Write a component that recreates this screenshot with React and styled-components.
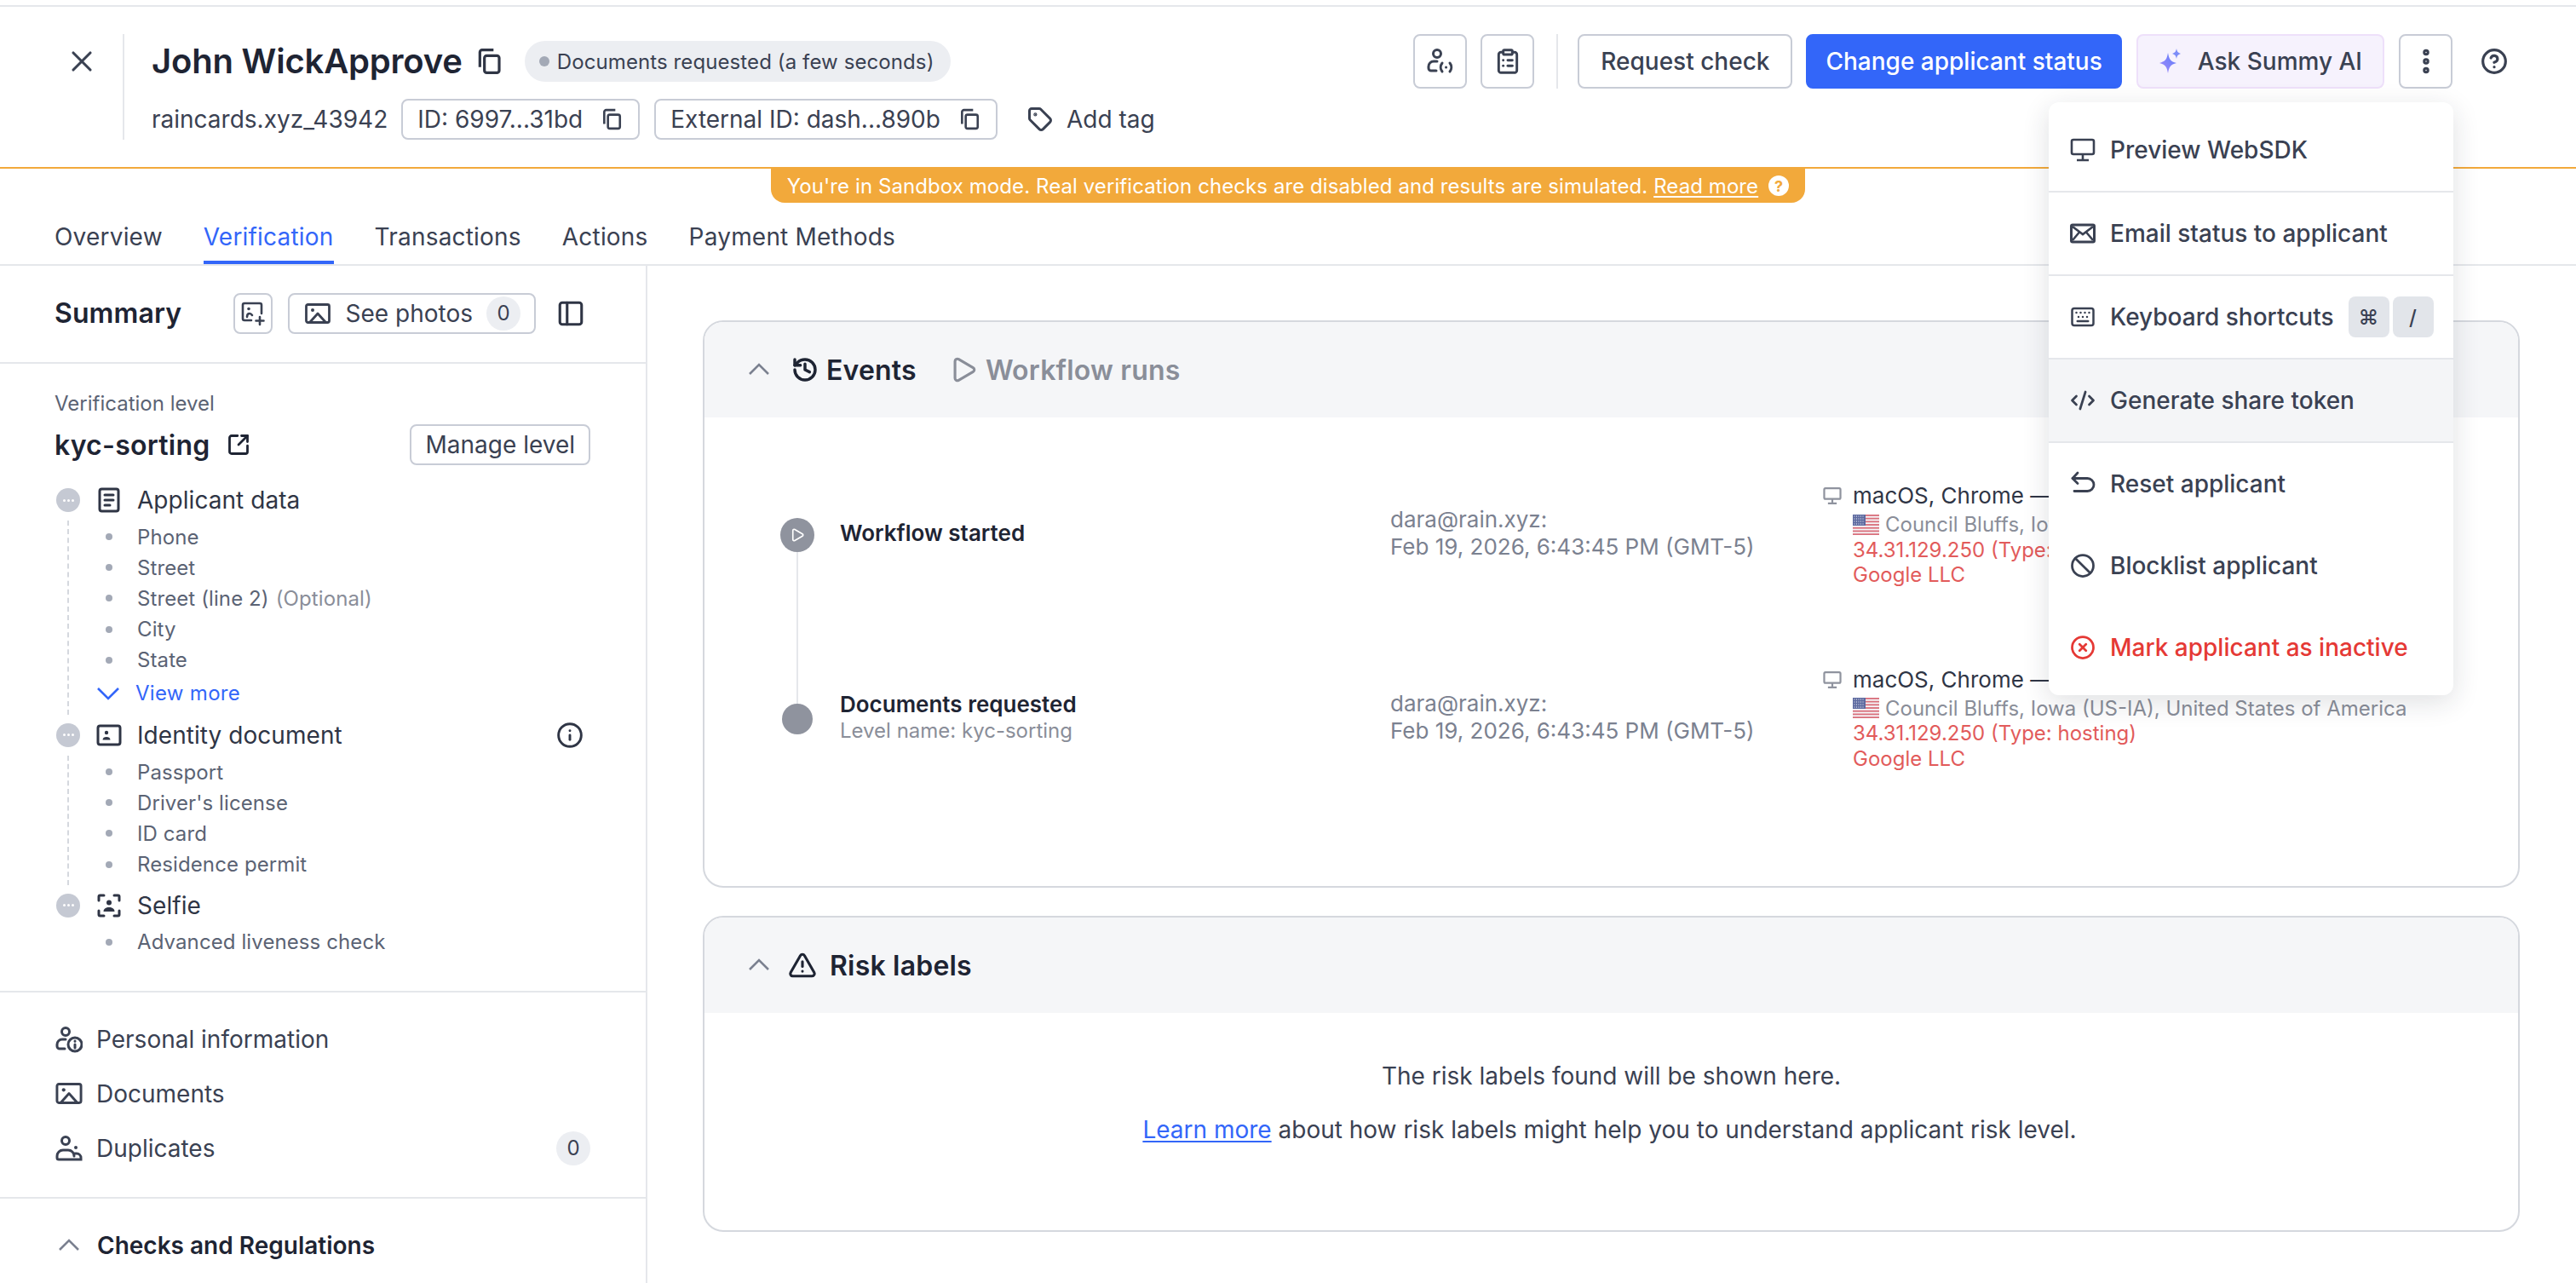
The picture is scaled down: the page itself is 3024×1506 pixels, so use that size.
import React from 'react';
import styled, { createGlobalStyle } from 'styled-components';
import {
  X, Tag, ClipboardList, Keyboard, CodeXml, Ban, CircleX, CircleHelp, PanelLeft,
  SquareArrowOutUpRight, Info, History, Play, TriangleAlert, MoreVertical,
} from 'lucide-react';

const GlobalStyle = createGlobalStyle`
  html, body { margin: 0; padding: 0; background: #fff; }
  body { font-family: Inter, "Liberation Sans", sans-serif; color: #2f3545; }
  * { box-sizing: border-box; }
`;

const Page = styled.div`
  position: relative;
  width: 3024px;
  height: 1506px;
  overflow: hidden;
  padding-top: 6px;
`;

const Header = styled.header`
  height: 192px;
  border-top: 2px solid #e5e7eb;
  border-bottom: 2px solid #f2a93b;
  display: flex;
  align-items: flex-start;
  padding-top: 32px;
`;

const CloseCell = styled.div`
  width: 146px;
  height: 124px;
  border-right: 2px solid #e5e7eb;
  display: flex;
  padding: 12px 0 0 76px;
  color: #3a4152;
`;

const TitleBlock = styled.div`
  margin-left: 32px;
`;

const TitleRow = styled.div`
  display: flex;
  align-items: center;
  height: 64px;
`;

const Name = styled.h1`
  margin: 0;
  font-size: 40px;
  line-height: 48px;
  font-weight: 600;
  letter-spacing: -0.2px;
  color: #1e2433;
`;

const TitleCopy = styled.span`
  display: flex;
  margin-left: 15px;
  color: #2f3545;
`;

const StatusBadge = styled.div`
  margin-left: 26px;
  height: 48px;
  padding: 0 19px 0 17px;
  border-radius: 24px;
  background: #eceef2;
  display: flex;
  align-items: center;
  gap: 9px;
  font-size: 24px;
  letter-spacing: 0.1px;
  color: #3a4152;
  white-space: nowrap;
`;

const StatusDot = styled.span`
  width: 12px;
  height: 12px;
  border-radius: 50%;
  background: #a3a9b6;
`;

const MetaRow = styled.div`
  display: flex;
  align-items: center;
  margin-top: 12px;
  height: 48px;
`;

const Handle = styled.span`
  font-size: 28px;
  color: #3a4152;
  margin-right: 16px;
`;

const IdPill = styled.div`
  height: 48px;
  padding: 0 18px 0 17px;
  margin-right: 17px;
  display: flex;
  align-items: center;
  gap: 21px;
  border: 2px solid #c8ccd6;
  border-radius: 8px;
  font-size: 28px;
  color: #3a4152;
  white-space: nowrap;
`;

const AddTag = styled.div`
  margin-left: 18px;
  display: flex;
  align-items: center;
  gap: 16px;
  font-size: 28px;
  color: #3a4152;
`;

const HeaderActions = styled.div`
  margin-left: auto;
  display: flex;
  align-items: center;
  height: 64px;
  padding-right: 80px;
`;

const ActionButton = styled.button`
  height: 64px;
  padding: 0 ${(p) => (p.$icon ? '0' : p.$pad ? `${p.$pad}px` : '25px')};
  width: ${(p) => (p.$icon ? '63px' : 'auto')};
  margin-left: ${(p) => p.$gap || 17}px;
  display: flex;
  align-items: center;
  justify-content: center;
  gap: 16px;
  border-radius: 8px;
  border: 2px solid ${(p) => (p.$primary ? '#3366f9' : p.$ai ? '#eee0fa' : '#c8ccd6')};
  background: ${(p) => (p.$primary ? '#3366f9' : p.$ai ? '#f6f2fd' : '#fff')};
  color: ${(p) => (p.$primary ? '#fff' : '#3a4152')};
  font: 500 28px Inter, sans-serif;
  white-space: nowrap;
`;

const ActionDivider = styled.div`
  width: 2px;
  height: 64px;
  margin-left: 26px;
  margin-right: -1px;
  background: #e5e7eb;
`;

const HelpButton = styled.div`
  margin-left: 33px;
  display: flex;
  color: #3a4152;
`;

const SandboxBanner = styled.div`
  position: absolute;
  top: 198px;
  left: 905px;
  width: 1214px;
  height: 40px;
  border-radius: 0 0 16px 16px;
  background: #f2a93b;
  color: #fff;
  font-size: 24px;
  letter-spacing: 0.08px;
  display: flex;
  align-items: center;
  justify-content: center;
  gap: 12px;
  white-space: nowrap;
`;

const BannerLink = styled.a`
  text-decoration: underline;
  text-underline-offset: 3px;
`;

const BannerHelp = styled.span`
  width: 24px;
  height: 24px;
  border-radius: 50%;
  background: #fff;
  color: #f2a93b;
  font-size: 18px;
  font-weight: 700;
  display: flex;
  align-items: center;
  justify-content: center;
`;

const Tabs = styled.nav`
  height: 114px;
  border-bottom: 2px solid #e5e7eb;
  display: flex;
  align-items: flex-end;
  gap: 48px;
  padding-left: 64px;
`;

const TabItem = styled.div`
  height: 64px;
  font-size: 28px;
  line-height: 64px;
  letter-spacing: 0.2px;
  white-space: nowrap;
  color: ${(p) => (p.$active ? '#3366f9' : '#3a4152')};
  border-bottom: 4px solid ${(p) => (p.$active ? '#3366f9' : 'transparent')};
`;

const Body = styled.div`
  display: flex;
  height: 1194px;
`;

const Sidebar = styled.aside`
  width: 760px;
  flex: none;
  border-right: 2px solid #e5e7eb;
`;

const SummaryBar = styled.div`
  height: 115px;
  border-bottom: 2px solid #e5e7eb;
  padding: 0 71px 2px 64px;
  display: flex;
  align-items: center;
`;

const SummaryTitle = styled.h2`
  margin: 0 auto 0 0;
  font-size: 32px;
  font-weight: 600;
  letter-spacing: 0.1px;
  color: #1e2433;
`;

const SmallButton = styled.div`
  height: 48px;
  width: ${(p) => (p.$square ? '46px' : 'auto')};
  margin-right: ${(p) => p.$mr || 0}px;
  padding: ${(p) => (p.$square ? '0' : '0 16px 0 18px')};
  border: 2px solid #c8ccd6;
  border-radius: 8px;
  display: flex;
  align-items: center;
  justify-content: center;
  font-size: 28px;
  color: #3a4152;
  white-space: nowrap;
`;

const CountBadge = styled.span`
  width: 40px;
  height: 40px;
  border-radius: 50%;
  background: #eceef2;
  font-size: 24px;
  color: #3a4152;
  display: flex;
  align-items: center;
  justify-content: center;
`;

const PhotosLabel = styled.span`
  margin: 0 16px 0 18px;
`;

const LevelSection = styled.section`
  padding: 29px 65px 35px 64px;
  border-bottom: 2px solid #e5e7eb;
`;

const LevelLabel = styled.div`
  font-size: 24px;
  line-height: 36px;
  color: #5b6374;
`;

const LevelRow = styled.div`
  display: flex;
  align-items: center;
  justify-content: space-between;
  margin-top: 6px;
`;

const LevelName = styled.div`
  display: flex;
  align-items: center;
  gap: 19px;
  font-size: 32px;
  font-weight: 600;
  letter-spacing: 0.25px;
  color: #1e2433;
`;

const ManageButton = styled(SmallButton)`
  padding: 0 16px;
`;

const Steps = styled.div`
  margin-top: 21px;
  padding-left: 1px;
`;

const StepRow = styled.div`
  display: flex;
  align-items: center;
  height: 40px;
  padding-left: 1px;
  font-size: 28px;
  letter-spacing: 0.05px;
  color: #2f3545;
`;

const StepCircle = styled.span`
  width: 28px;
  height: 28px;
  border-radius: 50%;
  background: #c5c9d3;
  display: flex;
  align-items: center;
  justify-content: center;
  gap: 2px;
  flex: none;
  & > i {
    width: 3px;
    height: 3px;
    border-radius: 50%;
    background: #fff;
  }
`;

const StepIcon = styled.span`
  width: 40px;
  margin: 0 13px 0 14px;
  display: flex;
  justify-content: center;
  flex: none;
`;

const StepInfo = styled.span`
  margin-left: auto;
  padding-right: 8px;
  display: flex;
  color: #2f3545;
`;

const StepBody = styled.div`
  margin: 4px 0 4px 14px;
  padding: 1px 0 ${(p) => (p.$last ? '0' : '6px')} 43px;
  border-left: 2px dashed ${(p) => (p.$last ? 'transparent' : '#d5d8de')};
`;

const CheckItem = styled.div`
  display: flex;
  align-items: center;
  height: 36.2px;
  gap: 29px;
  font-size: 24px;
  letter-spacing: 0.1px;
  color: #5b6374;
  &::before {
    content: '';
    width: 8px;
    height: 8px;
    border-radius: 50%;
    background: #a3a9b6;
  }
`;

const Optional = styled.span`
  color: #8a8e99;
  margin-left: 8px;
`;

const ViewMore = styled.div`
  display: flex;
  align-items: center;
  height: 36px;
  margin: 3px 0 1px -12px;
  gap: 17px;
  font-size: 24px;
  letter-spacing: 0.3px;
  color: #3366f9;
`;

const NavSection = styled.nav`
  padding: 23px 65px 25px 65px;
  border-bottom: 2px solid #e5e7eb;
`;

const NavItem = styled.div`
  display: flex;
  align-items: center;
  height: 64px;
  gap: 16px;
  font-size: 28px;
  color: #3a4152;
`;

const NavBadge = styled(CountBadge)`
  margin-left: auto;
`;

const ChecksRow = styled.div`
  display: flex;
  align-items: center;
  gap: 18px;
  padding: 35px 65px 0 66px;
  font-size: 28px;
  font-weight: 600;
  color: #1e2433;
  line-height: 40px;
`;

const Chevron = styled.span`
  display: flex;
  color: #7b8190;
`;

const Main = styled.main`
  flex: 1;
  padding: 64px 66px 0 65px;
  display: flex;
  flex-direction: column;
  gap: 33px;
`;

const Card = styled.section`
  border: 2px solid #d5d8de;
  border-radius: 24px;
  overflow: hidden;
  height: ${(p) => p.$height}px;
`;

const CardHeader = styled.div`
  height: 112px;
  background: #f5f6f8;
  display: flex;
  align-items: center;
  padding-left: 49px;
`;

const HeadTab = styled.div`
  display: flex;
  align-items: center;
  gap: ${(p) => p.$gap || 9}px;
  margin-left: ${(p) => p.$ml || 0}px;
  font-size: 32px;
  letter-spacing: 0.2px;
  font-weight: 600;
  color: ${(p) => (p.$muted ? '#8a8e99' : '#1e2433')};
`;

const EventsBody = styled.div`
  padding: 77px 0 0 88px;
`;

const EventRow = styled.div`
  display: flex;
  align-items: center;
  margin-bottom: 93px;
`;

const DotCol = styled.div`
  position: relative;
  width: 42px;
  margin-right: 29px;
  display: flex;
  justify-content: center;
  flex: none;
`;

const Dot = styled.span`
  width: ${(p) => p.$size}px;
  height: ${(p) => p.$size}px;
  border-radius: 50%;
  background: #8f939e;
  display: flex;
  align-items: center;
  justify-content: center;
  color: #fff;
`;

const DotLine = styled.span`
  position: absolute;
  top: 100%;
  left: 20px;
  width: 2px;
  height: 180px;
  background: #e5e7eb;
`;

const EventTitleCol = styled.div`
  width: 646px;
  flex: none;
  margin-top: -4px;
`;

const EventTitle = styled.div`
  font-size: 26px;
  line-height: 32px;
  font-weight: 600;
  color: #1e2433;
`;

const EventSub = styled.div`
  font-size: 24px;
  line-height: 30px;
  color: #8a8e99;
`;

const WhoCol = styled.div`
  width: 508px;
  flex: none;
  font-size: 26px;
  line-height: 32px;
  color: #7b8190;
  margin-top: -4px;
`;

const DeviceCol = styled.div`
  font-size: 24px;
  line-height: 29.5px;
`;

const DeviceLine = styled.div`
  display: flex;
  align-items: center;
  gap: 13px;
  font-size: 26px;
  line-height: 34px;
  color: #2f3545;
  margin: -2px 0 2px;
  white-space: nowrap;
  & > svg { color: #8f939e; }
`;

const DeviceIndent = styled.div`
  padding-left: 35px;
  white-space: nowrap;
  color: ${(p) => (p.$red ? '#e25b5b' : '#8a8e99')};
`;

const GeoLine = styled(DeviceIndent)`
  display: flex;
  align-items: center;
  gap: 7px;
`;

const RiskBody = styled.div`
  padding-top: 54px;
  text-align: center;
  font-size: 28px;
  line-height: 40px;
  color: #3a4152;
`;

const RiskLine = styled.p`
  margin: 0 0 23px ${(p) => (p.$nudge ? '-4px' : '0')};
`;

const RiskLink = styled.a`
  color: #3366f9;
  text-decoration: underline;
  text-underline-offset: 3px;
`;

const Menu = styled.div`
  position: absolute;
  top: 120px;
  left: 2405px;
  width: 475px;
  height: 696px;
  border-radius: 12px;
  background: #fff;
  box-shadow: 0 8px 32px rgba(30, 36, 51, 0.14);
  overflow: hidden;
  padding-top: 8px;
`;

const MenuItem = styled.div`
  height: ${(p) => p.$h || 98}px;
  padding: 0 25px 0 25px;
  display: flex;
  align-items: center;
  gap: 17px;
  font-size: 28px;
  font-weight: 500;
  white-space: nowrap;
  color: ${(p) => (p.$danger ? '#e53935' : '#3a4152')};
  background: ${(p) => (p.$hover ? '#f4f5f7' : 'transparent')};
  border-bottom: ${(p) => (p.$divided ? '2px solid #e5e7eb' : 'none')};
`;

const MenuIcon = styled.span`
  width: 30px;
  display: flex;
  justify-content: center;
  flex: none;
`;

const KbdGroup = styled.span`
  margin-left: auto;
  display: flex;
  gap: 4px;
`;

const Kbd = styled.kbd`
  width: 48px;
  height: 48px;
  border-radius: 8px;
  background: #e2e5ea;
  font: 500 24px Inter, "DejaVu Sans", sans-serif;
  display: flex;
  align-items: center;
  justify-content: center;
  color: #3a4152;
`;

const CopyIcon = ({ size = 24 }) => (
  <svg width={size} height={size} viewBox="0 0 24 24" fill="none" stroke="currentColor" strokeWidth="2.4" strokeLinejoin="round">
    <rect x="8" y="7" width="13" height="15" rx="2" />
    <path d="M4 17V4a2 2 0 0 1 2-2h10" />
  </svg>
);

const ChevronGlyph = ({ down }) => (
  <svg width="30" height="30" viewBox="0 0 30 30" fill="none" stroke="currentColor" strokeWidth="2.6">
    <path d={down ? 'M3 9l12 12 12-12' : 'M4 20L15 9l11 11'} />
  </svg>
);

const PersonLink = ({ size = 32, info }) => (
  <svg width={size} height={size} viewBox="0 0 32 32" fill="none" stroke="currentColor" strokeWidth="3" strokeLinecap="round">
    <circle cx="12" cy="7" r="4.5" />
    <path d="M12 16H8a6 6 0 0 0-6 6v2a3 3 0 0 0 3 3h6" />
    {info ? (
      <>
        <circle cx="23" cy="22" r="8" />
        <path d="M23 22v4M23 18v.2" />
      </>
    ) : (
      <path d="M18 18a8 8 0 0 0 0 10M27 18a8 8 0 0 1 0 10M22.5 23h.1" />
    )}
  </svg>
);

const DuplicatesIcon = () => (
  <svg width="32" height="32" viewBox="0 0 32 32" fill="none" stroke="currentColor" strokeWidth="3" strokeLinecap="round">
    <circle cx="12" cy="7" r="4.5" />
    <path d="M4 29a2 2 0 0 1-2-2v-2a7 7 0 0 1 7-7h6a7 7 0 0 1 7 7M4 29h26v-2a5 5 0 0 0-5-5h-3" />
    <circle cx="24" cy="15" r="2" fill="currentColor" stroke="none" />
  </svg>
);

const PhotoIcon = ({ width = 30, height = 24 }) => (
  <svg width={width} height={height} viewBox="0 0 30 24" fill="none" stroke="currentColor" strokeWidth="2.8" strokeLinejoin="round">
    <rect x="1.500" y="1.500" width="27" height="21" rx="2" />
    <circle cx="9" cy="8" r="2" fill="currentColor" stroke="none" />
    <path d="M6 22l9-10 9 10" />
  </svg>
);

const PhotoPlus = () => (
  <svg width="30" height="30" viewBox="0 0 30 30" fill="none" stroke="currentColor" strokeWidth="2.6" strokeLinecap="round">
    <path d="M13 23H5a2 2 0 0 1-2-2V5a2 2 0 0 1 2-2h18a2 2 0 0 1 2 2v10" />
    <circle cx="10" cy="9.500" r="1.800" fill="currentColor" stroke="none" />
    <path d="M8 19c0-3 1.500-4 3-4s2 .5 3 2" />
    <path d="M23 19v9M18.500 23.500h9" />
  </svg>
);

const DocIcon = () => (
  <svg width="26" height="30" viewBox="0 0 26 30" fill="none" stroke="currentColor" strokeWidth="3" strokeLinecap="round">
    <rect x="2" y="2" width="22" height="26" rx="2.500" />
    <path d="M8 9h10M8 15h10M8 21h6" />
  </svg>
);

const IdCard = () => (
  <svg width="30" height="26" viewBox="0 0 30 26" fill="none" stroke="currentColor" strokeWidth="3">
    <rect x="2" y="2" width="26" height="22" rx="2.500" />
    <circle cx="12" cy="10" r="2.200" fill="currentColor" stroke="none" />
    <path d="M7.500 18.500c0-2.500 2-3.500 4.500-3.500s4.500 1 4.500 3.500z" fill="currentColor" stroke="none" />
  </svg>
);

const SelfieIcon = () => (
  <svg width="28" height="28" viewBox="0 0 28 28" fill="none" stroke="currentColor" strokeWidth="3" strokeLinecap="round">
    <path d="M2 8V3.500A1.500 1.500 0 0 1 3.500 2H8M20 2h4.500A1.500 1.500 0 0 1 26 3.500V8M2 20v4.500A1.500 1.500 0 0 0 3.500 26H8M20 26h4.500a1.500 1.500 0 0 0 1.500-1.500V20" />
    <circle cx="14" cy="10.500" r="3" fill="currentColor" stroke="none" />
    <path d="M7.500 21c0-3.500 3-5 6.500-5s6.500 1.500 6.500 5z" fill="currentColor" stroke="none" />
  </svg>
);

const MonitorIcon = ({ size = 30, sw = 2.6 }) => (
  <svg width={size} height={size} viewBox="0 0 30 30" fill="none" stroke="currentColor" strokeWidth={sw} strokeLinejoin="round">
    <rect x="2" y="3" width="26" height="17" rx="2" />
    <path d="M15 20v6M8 27h14" />
  </svg>
);

const MailIcon = () => (
  <svg width="30" height="24" viewBox="0 0 30 24" fill="none" stroke="currentColor" strokeWidth="3">
    <rect x="1.500" y="2" width="27" height="20" rx="1.500" />
    <path d="M3 4l12 9 12-9M3 20l8-9.500M27 20l-8-9.500" strokeWidth="2.600" />
  </svg>
);

const ResetIcon = () => (
  <svg width="30" height="30" viewBox="0 0 30 30" fill="none" stroke="currentColor" strokeWidth="2.8" strokeLinecap="round" strokeLinejoin="round">
    <path d="M9 2L3 8.500l6 6" />
    <path d="M3 8.500h17.500a7 7 0 0 1 0 15H5" />
  </svg>
);

const Sparkles = () => (
  <svg width="30" height="32" viewBox="0 0 30 32">
    <defs>
      <linearGradient id="spark" x1="0" y1="1" x2="1" y2="0">
        <stop offset="0" stopColor="#a78bfa" />
        <stop offset="1" stopColor="#5b7cfa" />
      </linearGradient>
    </defs>
    <path d="M11 6c1.500 8 3 10 10 12-7 2-8.500 4-10 12-1.500-8-3-10-10-12 7-2 8.500-4 10-12z" fill="url(#spark)" />
    <path d="M21 1c.8 3.800 1.600 4.800 5 6-3.400 1.200-4.200 2.200-5 6-.8-3.800-1.600-4.800-5-6 3.400-1.200 4.200-2.200 5-6z" fill="#7c8cf8" />
  </svg>
);

const UsFlag = () => (
  <svg width="31" height="24" viewBox="0 0 31 24">
    <rect width="31" height="24" rx="2" fill="#f6f6f8" />
    {[0, 2, 4, 6, 8, 10, 12].map((i) => (
      <rect key={i} y={i * 1.85} width="31" height="1.850" fill="#d9707c" />
    ))}
    <rect width="15" height="13" fill="#5d6aa0" />
    {[2, 5, 8, 11].map((y) => (
      <path key={y} d={`M1.500 ${y}h12`} stroke="#fff" strokeWidth="1" strokeDasharray="1 1.500" />
    ))}
  </svg>
);

const checks = {
  applicant: ['Phone', 'Street', 'Street (line 2)', 'City', 'State'],
  identity: ['Passport', "Driver's license", 'ID card', 'Residence permit'],
};

const DeviceInfo = ({ geo, ip }) => (
  <DeviceCol>
    <DeviceLine>
      <MonitorIcon size={22} sw={3} />
      macOS, Chrome —
    </DeviceLine>
    <GeoLine>
      <UsFlag />
      {geo}
    </GeoLine>
    <DeviceIndent $red>{ip}</DeviceIndent>
    <DeviceIndent $red>Google LLC</DeviceIndent>
  </DeviceCol>
);

const Step = ({ icon, label, info, children, last }) => (
  <>
    <StepRow>
      <StepCircle><i /><i /><i /></StepCircle>
      <StepIcon>{icon}</StepIcon>
      {label}
      {info && <StepInfo><Info size={32} strokeWidth={2.2} /></StepInfo>}
    </StepRow>
    <StepBody $last={last}>{children}</StepBody>
  </>
);

export default function App() {
  return (
    <Page>
      <GlobalStyle />
      <Header>
        <CloseCell><X size={40} strokeWidth={1.9} /></CloseCell>
        <TitleBlock>
          <TitleRow>
            <Name>John WickApprove</Name>
            <TitleCopy><CopyIcon size={32} /></TitleCopy>
            <StatusBadge>
              <StatusDot />
              Documents requested (a few seconds)
            </StatusBadge>
          </TitleRow>
          <MetaRow>
            <Handle>raincards.xyz_43942</Handle>
            <IdPill>ID: 6997...31bd <CopyIcon size={26} /></IdPill>
            <IdPill>External ID: dash...890b <CopyIcon size={26} /></IdPill>
            <AddTag><Tag size={30} strokeWidth={2.4} />Add tag</AddTag>
          </MetaRow>
        </TitleBlock>
        <HeaderActions>
          <ActionButton $icon><PersonLink /></ActionButton>
          <ActionButton $icon $gap={16}><ClipboardList size={32} strokeWidth={2.2} /></ActionButton>
          <ActionDivider />
          <ActionButton $gap={24}>Request check</ActionButton>
          <ActionButton $primary $gap={16} $pad={21}>Change applicant status</ActionButton>
          <ActionButton $ai $gap={17} $pad={24}><Sparkles />Ask Summy AI</ActionButton>
          <ActionButton $icon $gap={17}><MoreVertical size={36} strokeWidth={3} /></ActionButton>
          <HelpButton><CircleHelp size={32} strokeWidth={2.4} /></HelpButton>
        </HeaderActions>
      </Header>

      <SandboxBanner>
        <span>You're in Sandbox mode. Real verification checks are disabled and results are simulated. <BannerLink>Read more</BannerLink></span>
        <BannerHelp>?</BannerHelp>
      </SandboxBanner>

      <Tabs>
        <TabItem>Overview</TabItem>
        <TabItem $active>Verification</TabItem>
        <TabItem>Transactions</TabItem>
        <TabItem>Actions</TabItem>
        <TabItem>Payment Methods</TabItem>
      </Tabs>

      <Body>
        <Sidebar>
          <SummaryBar>
            <SummaryTitle>Summary</SummaryTitle>
            <SmallButton $square $mr={18}><PhotoPlus /></SmallButton>
            <SmallButton $mr={24}>
              <PhotoIcon />
              <PhotosLabel>See photos</PhotosLabel>
              <CountBadge>0</CountBadge>
            </SmallButton>
            <PanelLeft size={34} strokeWidth={2.2} />
          </SummaryBar>

          <LevelSection>
            <LevelLabel>Verification level</LevelLabel>
            <LevelRow>
              <LevelName>kyc-sorting <SquareArrowOutUpRight size={28} strokeWidth={2.4} /></LevelName>
              <ManageButton>Manage level</ManageButton>
            </LevelRow>
            <Steps>
              <Step icon={<DocIcon />} label="Applicant data">
                {checks.applicant.map((item) => (
                  <CheckItem key={item}>
                    <span>{item}{item === 'Street (line 2)' && <Optional>(Optional)</Optional>}</span>
                  </CheckItem>
                ))}
                <ViewMore><ChevronGlyph down />View more</ViewMore>
              </Step>
              <Step icon={<IdCard />} label="Identity document" info>
                {checks.identity.map((item) => <CheckItem key={item}>{item}</CheckItem>)}
              </Step>
              <Step icon={<SelfieIcon />} label="Selfie" last>
                <CheckItem>Advanced liveness check</CheckItem>
              </Step>
            </Steps>
          </LevelSection>

          <NavSection>
            <NavItem><PersonLink info />Personal information</NavItem>
            <NavItem><PhotoIcon width={32} height={25} />Documents</NavItem>
            <NavItem><DuplicatesIcon />Duplicates<NavBadge>0</NavBadge></NavItem>
          </NavSection>

          <ChecksRow>
            <Chevron><ChevronGlyph /></Chevron>
            Checks and Regulations
          </ChecksRow>
        </Sidebar>

        <Main>
          <Card $height={666}>
            <CardHeader>
              <Chevron><ChevronGlyph /></Chevron>
              <HeadTab $ml={23}><History size={32} strokeWidth={2.6} />Events</HeadTab>
              <HeadTab $ml={38} $muted><Play size={34} strokeWidth={2.2} />Workflow runs</HeadTab>
            </CardHeader>
            <EventsBody>
              <EventRow>
                <DotCol>
                  <Dot $size={40}><Play size={18} strokeWidth={2.2} /></Dot>
                  <DotLine />
                </DotCol>
                <EventTitleCol><EventTitle>Workflow started</EventTitle></EventTitleCol>
                <WhoCol>dara@rain.xyz:<br />Feb 19, 2026, 6:43:45 PM (GMT-5)</WhoCol>
                <DeviceInfo geo="Council Bluffs, Iowa (US-IA), United States of America" ip="34.31.129.250 (Type: hosting)" />
              </EventRow>
              <EventRow>
                <DotCol><Dot $size={36} /></DotCol>
                <EventTitleCol>
                  <EventTitle>Documents requested</EventTitle>
                  <EventSub>Level name: kyc-sorting</EventSub>
                </EventTitleCol>
                <WhoCol>dara@rain.xyz:<br />Feb 19, 2026, 6:43:45 PM (GMT-5)</WhoCol>
                <DeviceInfo geo="Council Bluffs, Iowa (US-IA), United States of America" ip="34.31.129.250 (Type: hosting)" />
              </EventRow>
            </EventsBody>
          </Card>

          <Card $height={371}>
            <CardHeader>
              <Chevron><ChevronGlyph /></Chevron>
              <HeadTab $ml={19} $gap={15}><TriangleAlert size={34} strokeWidth={2.2} />Risk labels</HeadTab>
            </CardHeader>
            <RiskBody>
              <RiskLine>The risk labels found will be shown here.</RiskLine>
              <RiskLine $nudge><RiskLink>Learn more</RiskLink> about how risk labels might help you to understand applicant risk level.</RiskLine>
            </RiskBody>
          </Card>
        </Main>
      </Body>

      <Menu>
        <MenuItem $divided><MenuIcon><MonitorIcon /></MenuIcon>Preview WebSDK</MenuItem>
        <MenuItem $divided><MenuIcon><MailIcon /></MenuIcon>Email status to applicant</MenuItem>
        <MenuItem $divided>
          <MenuIcon><Keyboard size={36} strokeWidth={2} /></MenuIcon>
          Keyboard shortcuts
          <KbdGroup>
            <Kbd>⌘</Kbd>
            <Kbd>/</Kbd>
          </KbdGroup>
        </MenuItem>
        <MenuItem $divided $hover><MenuIcon><CodeXml size={34} strokeWidth={2.2} /></MenuIcon>Generate share token</MenuItem>
        <MenuItem $h={96}><MenuIcon><ResetIcon /></MenuIcon>Reset applicant</MenuItem>
        <MenuItem $h={96}><MenuIcon><Ban size={34} strokeWidth={2.2} /></MenuIcon>Blocklist applicant</MenuItem>
        <MenuItem $h={96} $danger><MenuIcon><CircleX size={34} strokeWidth={2.2} /></MenuIcon>Mark applicant as inactive</MenuItem>
      </Menu>
    </Page>
  );
}
